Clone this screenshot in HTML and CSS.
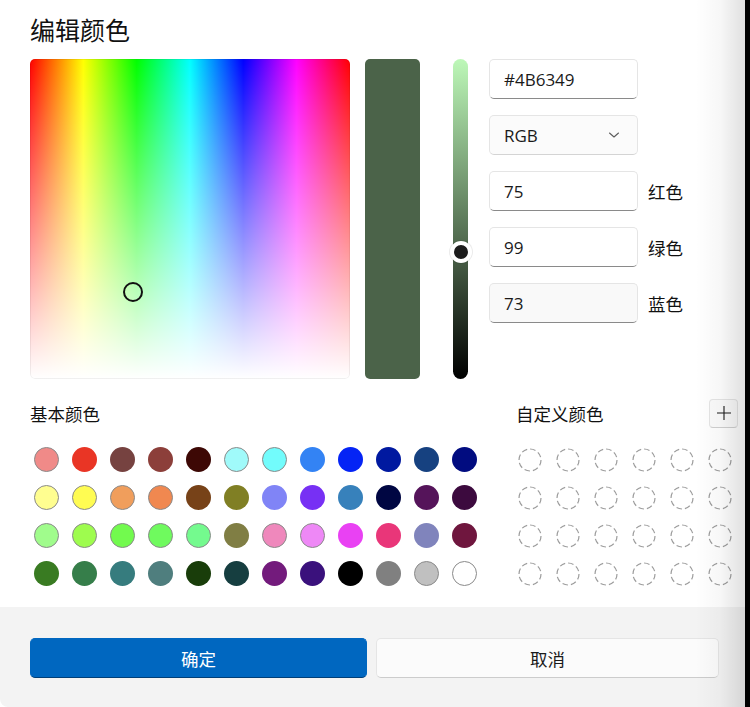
FILE: index.html
```html
<!DOCTYPE html>
<html lang="zh-CN">
<head>
<meta charset="utf-8">
<title>编辑颜色</title>
<link rel="stylesheet" href="styles.css">
</head>
<body>
<div class="window">
  <div class="content">
    <h1 class="title">编辑颜色</h1>
    <div class="picker">
      <div class="spectrum"><span class="spectrum-marker"></span></div>
      <div class="preview"></div>
      <div class="value-slider"><span class="slider-thumb"></span></div>
      <div class="fields">
        <div class="field-row"><div class="textbox">#4B6349</div></div>
        <div class="field-row">
          <div class="combo">
            <span>RGB</span>
            <svg class="chevron" width="12" height="8" viewBox="0 0 12 8"><path d="M1.5 2 L6 6 L10.5 2" fill="none" stroke="#5c5c5c" stroke-width="1.1" stroke-linecap="round" stroke-linejoin="round"/></svg>
          </div>
        </div>
        <div class="field-row"><div class="textbox">75</div><span class="field-label">红色</span></div>
        <div class="field-row"><div class="textbox">99</div><span class="field-label">绿色</span></div>
        <div class="field-row"><div class="textbox hover">73</div><span class="field-label">蓝色</span></div>
      </div>
    </div>
    <div class="palettes">
      <section class="basic">
        <div class="section-head"><h2 class="section-title">基本颜色</h2></div>
        <div class="basic-grid">
          <span class="swatch light" style="background:#f08a88"></span>
          <span class="swatch" style="background:#e93525"></span>
          <span class="swatch" style="background:#764240"></span>
          <span class="swatch" style="background:#8c3f3a"></span>
          <span class="swatch" style="background:#3d0805"></span>
          <span class="swatch light" style="background:#a0fafa"></span>
          <span class="swatch light" style="background:#72fcfc"></span>
          <span class="swatch" style="background:#3383f4"></span>
          <span class="swatch" style="background:#0524f5"></span>
          <span class="swatch" style="background:#0019a0"></span>
          <span class="swatch" style="background:#164180"></span>
          <span class="swatch" style="background:#010c80"></span>

          <span class="swatch light" style="background:#fffe90"></span>
          <span class="swatch light" style="background:#fffc52"></span>
          <span class="swatch light" style="background:#f09e5c"></span>
          <span class="swatch light" style="background:#f08850"></span>
          <span class="swatch" style="background:#774218"></span>
          <span class="swatch" style="background:#807f24"></span>
          <span class="swatch" style="background:#8084f6"></span>
          <span class="swatch" style="background:#7730f4"></span>
          <span class="swatch" style="background:#3781bb"></span>
          <span class="swatch" style="background:#000642"></span>
          <span class="swatch" style="background:#55145a"></span>
          <span class="swatch" style="background:#3c0a3e"></span>

          <span class="swatch light" style="background:#a0fc8c"></span>
          <span class="swatch light" style="background:#9efc4e"></span>
          <span class="swatch light" style="background:#72fa4e"></span>
          <span class="swatch light" style="background:#6ffa5e"></span>
          <span class="swatch light" style="background:#74fa8e"></span>
          <span class="swatch" style="background:#807e44"></span>
          <span class="swatch light" style="background:#ef88bc"></span>
          <span class="swatch light" style="background:#ee88f6"></span>
          <span class="swatch" style="background:#e941f3"></span>
          <span class="swatch" style="background:#e93679"></span>
          <span class="swatch" style="background:#8084bc"></span>
          <span class="swatch" style="background:#6f163e"></span>

          <span class="swatch" style="background:#397b22"></span>
          <span class="swatch" style="background:#367e4a"></span>
          <span class="swatch" style="background:#367c7e"></span>
          <span class="swatch" style="background:#4f7e7e"></span>
          <span class="swatch" style="background:#193d0a"></span>
          <span class="swatch" style="background:#163e40"></span>
          <span class="swatch" style="background:#731b7c"></span>
          <span class="swatch" style="background:#3a117c"></span>
          <span class="swatch" style="background:#000000"></span>
          <span class="swatch" style="background:#808080"></span>
          <span class="swatch light" style="background:#c0c0c0"></span>
          <span class="swatch light" style="background:#ffffff"></span>
        </div>
      </section>
      <section class="custom">
        <div class="section-head">
          <h2 class="section-title">自定义颜色</h2>
          <button class="add-btn" type="button" aria-label="添加">
            <svg width="16" height="16" viewBox="0 0 16 16"><path d="M8 1 V15 M1 8 H15" fill="none" stroke="#1b1b1b" stroke-width="1.1"/></svg>
          </button>
        </div>
        <div class="custom-grid">
          <svg class="slot" viewBox="0 0 24 24"><circle cx="12" cy="12" r="11"/></svg>
          <svg class="slot" viewBox="0 0 24 24"><circle cx="12" cy="12" r="11"/></svg>
          <svg class="slot" viewBox="0 0 24 24"><circle cx="12" cy="12" r="11"/></svg>
          <svg class="slot" viewBox="0 0 24 24"><circle cx="12" cy="12" r="11"/></svg>
          <svg class="slot" viewBox="0 0 24 24"><circle cx="12" cy="12" r="11"/></svg>
          <svg class="slot" viewBox="0 0 24 24"><circle cx="12" cy="12" r="11"/></svg>
          <svg class="slot" viewBox="0 0 24 24"><circle cx="12" cy="12" r="11"/></svg>
          <svg class="slot" viewBox="0 0 24 24"><circle cx="12" cy="12" r="11"/></svg>
          <svg class="slot" viewBox="0 0 24 24"><circle cx="12" cy="12" r="11"/></svg>
          <svg class="slot" viewBox="0 0 24 24"><circle cx="12" cy="12" r="11"/></svg>
          <svg class="slot" viewBox="0 0 24 24"><circle cx="12" cy="12" r="11"/></svg>
          <svg class="slot" viewBox="0 0 24 24"><circle cx="12" cy="12" r="11"/></svg>
          <svg class="slot" viewBox="0 0 24 24"><circle cx="12" cy="12" r="11"/></svg>
          <svg class="slot" viewBox="0 0 24 24"><circle cx="12" cy="12" r="11"/></svg>
          <svg class="slot" viewBox="0 0 24 24"><circle cx="12" cy="12" r="11"/></svg>
          <svg class="slot" viewBox="0 0 24 24"><circle cx="12" cy="12" r="11"/></svg>
          <svg class="slot" viewBox="0 0 24 24"><circle cx="12" cy="12" r="11"/></svg>
          <svg class="slot" viewBox="0 0 24 24"><circle cx="12" cy="12" r="11"/></svg>
          <svg class="slot" viewBox="0 0 24 24"><circle cx="12" cy="12" r="11"/></svg>
          <svg class="slot" viewBox="0 0 24 24"><circle cx="12" cy="12" r="11"/></svg>
          <svg class="slot" viewBox="0 0 24 24"><circle cx="12" cy="12" r="11"/></svg>
          <svg class="slot" viewBox="0 0 24 24"><circle cx="12" cy="12" r="11"/></svg>
          <svg class="slot" viewBox="0 0 24 24"><circle cx="12" cy="12" r="11"/></svg>
          <svg class="slot" viewBox="0 0 24 24"><circle cx="12" cy="12" r="11"/></svg>
        </div>
      </section>
    </div>
  </div>
  <div class="footer">
    <button class="btn primary" type="button">确定</button>
    <button class="btn secondary" type="button">取消</button>
  </div>
</div>
<div class="edge"></div>
</body>
</html>
```

FILE: styles.css
```css
* {
  box-sizing: border-box;
  margin: 0;
  padding: 0;
}

html,
body {
  width: 750px;
  height: 707px;
  overflow: hidden;
}

body {
  display: flex;
  background: #ffffff;
  font-family: "Noto Sans CJK SC", "Noto Sans", sans-serif;
  color: #1a1a1a;
}

.window {
  position: relative;
  width: 745px;
  height: 707px;
  display: flex;
  flex-direction: column;
  background: #ffffff;
  border-bottom-left-radius: 8px;
  overflow: hidden;
}

.window::after {
  content: "";
  position: absolute;
  top: 0;
  right: 0;
  bottom: 0;
  width: 50px;
  background: linear-gradient(to right, rgba(0, 0, 0, 0), rgba(0, 0, 0, 0.03) 50%, rgba(0, 0, 0, 0.12));
  pointer-events: none;
}

.edge {
  width: 5px;
  height: 707px;
  background: #000000;
}

.content {
  flex: 1;
  padding: 12px 7px 0 30px;
}

.title {
  font-size: 25px;
  font-weight: 400;
  line-height: 34px;
  height: 34px;
  margin-bottom: 13px;
  color: #111;
}

.picker {
  display: flex;
  height: 320px;
}

.spectrum {
  position: relative;
  width: 320px;
  height: 320px;
  border-radius: 5px;
  background:
    linear-gradient(to bottom, rgba(255, 255, 255, 0), #ffffff),
    linear-gradient(to right, #ff0000, #ffff00 16.67%, #00ff00 33.33%, #00ffff 50%, #0000ff 66.67%, #ff00ff 83.33%, #ff0000);
  box-shadow: inset 0 0 0 1px rgba(0, 0, 0, 0.06);
}

.spectrum-marker {
  position: absolute;
  left: 93px;
  top: 223px;
  width: 20px;
  height: 20px;
  border: 2px solid #111;
  border-radius: 50%;
}

.preview {
  width: 55px;
  height: 320px;
  margin-left: 15px;
  border-radius: 5px;
  background: #4b6349;
}

.value-slider {
  position: relative;
  width: 15px;
  height: 320px;
  margin-left: 33px;
  border-radius: 8px;
  background: linear-gradient(to bottom, #bdf8b8, #000000);
}

.slider-thumb {
  position: absolute;
  left: 50%;
  top: 192.7px;
  width: 22px;
  height: 22px;
  margin-left: -11px;
  margin-top: -11px;
  border-radius: 50%;
  background: #1c1c1c;
  border: 4px solid #ffffff;
  box-shadow: 0 0 0 1px rgba(0, 0, 0, 0.08);
}

.fields {
  margin-left: 21px;
  display: flex;
  flex-direction: column;
  gap: 16px;
}

.field-row {
  display: flex;
  align-items: center;
  height: 40px;
}

.textbox,
.combo {
  width: 149px;
  height: 40px;
  border: 1px solid #e5e5e5;
  border-bottom-color: #8a8a8a;
  border-radius: 5px;
  background: #ffffff;
  padding: 0 14px;
  display: flex;
  align-items: center;
  font-family: "Open Sans", "Noto Sans", sans-serif;
  font-size: 17px;
  color: #1a1a1a;
}

.textbox.hover {
  background: #f9f9f9;
}

.combo {
  justify-content: space-between;
  background: #fbfbfb;
  border-bottom-color: #d4d4d4;
  padding-right: 17px;
}

.field-label {
  margin-left: 10px;
  font-size: 17.5px;
  color: #111;
}

.palettes {
  display: flex;
  margin-top: 19px;
}

.basic {
  flex: 0 0 486px;
}

.custom {
  flex: 1;
}

.section-head {
  height: 30px;
  display: flex;
  align-items: center;
  justify-content: space-between;
}

.section-title {
  font-size: 17.5px;
  font-weight: 400;
  color: #111;
}

.basic-grid {
  display: grid;
  grid-template-columns: repeat(12, 25px);
  grid-auto-rows: 25px;
  gap: 13px;
  margin: 19px 0 0 4px;
}

.swatch {
  display: block;
  width: 25px;
  height: 25px;
  border-radius: 50%;
}

.swatch.light {
  border: 1.5px solid #8a8a8a;
}

.add-btn {
  width: 29px;
  height: 29px;
  display: flex;
  align-items: center;
  justify-content: center;
  background: #fbfbfb;
  border: 1px solid #e5e5e5;
  border-bottom-color: #d0d0d0;
  border-radius: 4px;
}

.custom-grid {
  display: grid;
  grid-template-columns: repeat(6, 24px);
  grid-auto-rows: 24px;
  gap: 14px;
  margin: 20px 0 0 2px;
}

.slot {
  display: block;
  width: 24px;
  height: 24px;
  fill: none;
  stroke: #9c9c9c;
  stroke-width: 1.2;
  stroke-dasharray: 5.6 3;
}

.footer {
  height: 100px;
  background: #f3f3f3;
  display: flex;
  align-items: flex-start;
  gap: 9px;
  padding: 31px 26px 0 30px;
}

.btn {
  height: 40px;
  border-radius: 5px;
  font-family: "Noto Sans CJK SC", sans-serif;
  font-size: 17.5px;
}

.primary {
  flex: 0 0 337px;
  background: #0067c0;
  color: #ffffff;
  border: 1px solid #0067c0;
  border-bottom-color: #003f78;
}

.secondary {
  flex: 1;
  background: #fbfbfb;
  color: #1a1a1a;
  border: 1px solid #e5e5e5;
  border-bottom-color: #cccccc;
}
```
